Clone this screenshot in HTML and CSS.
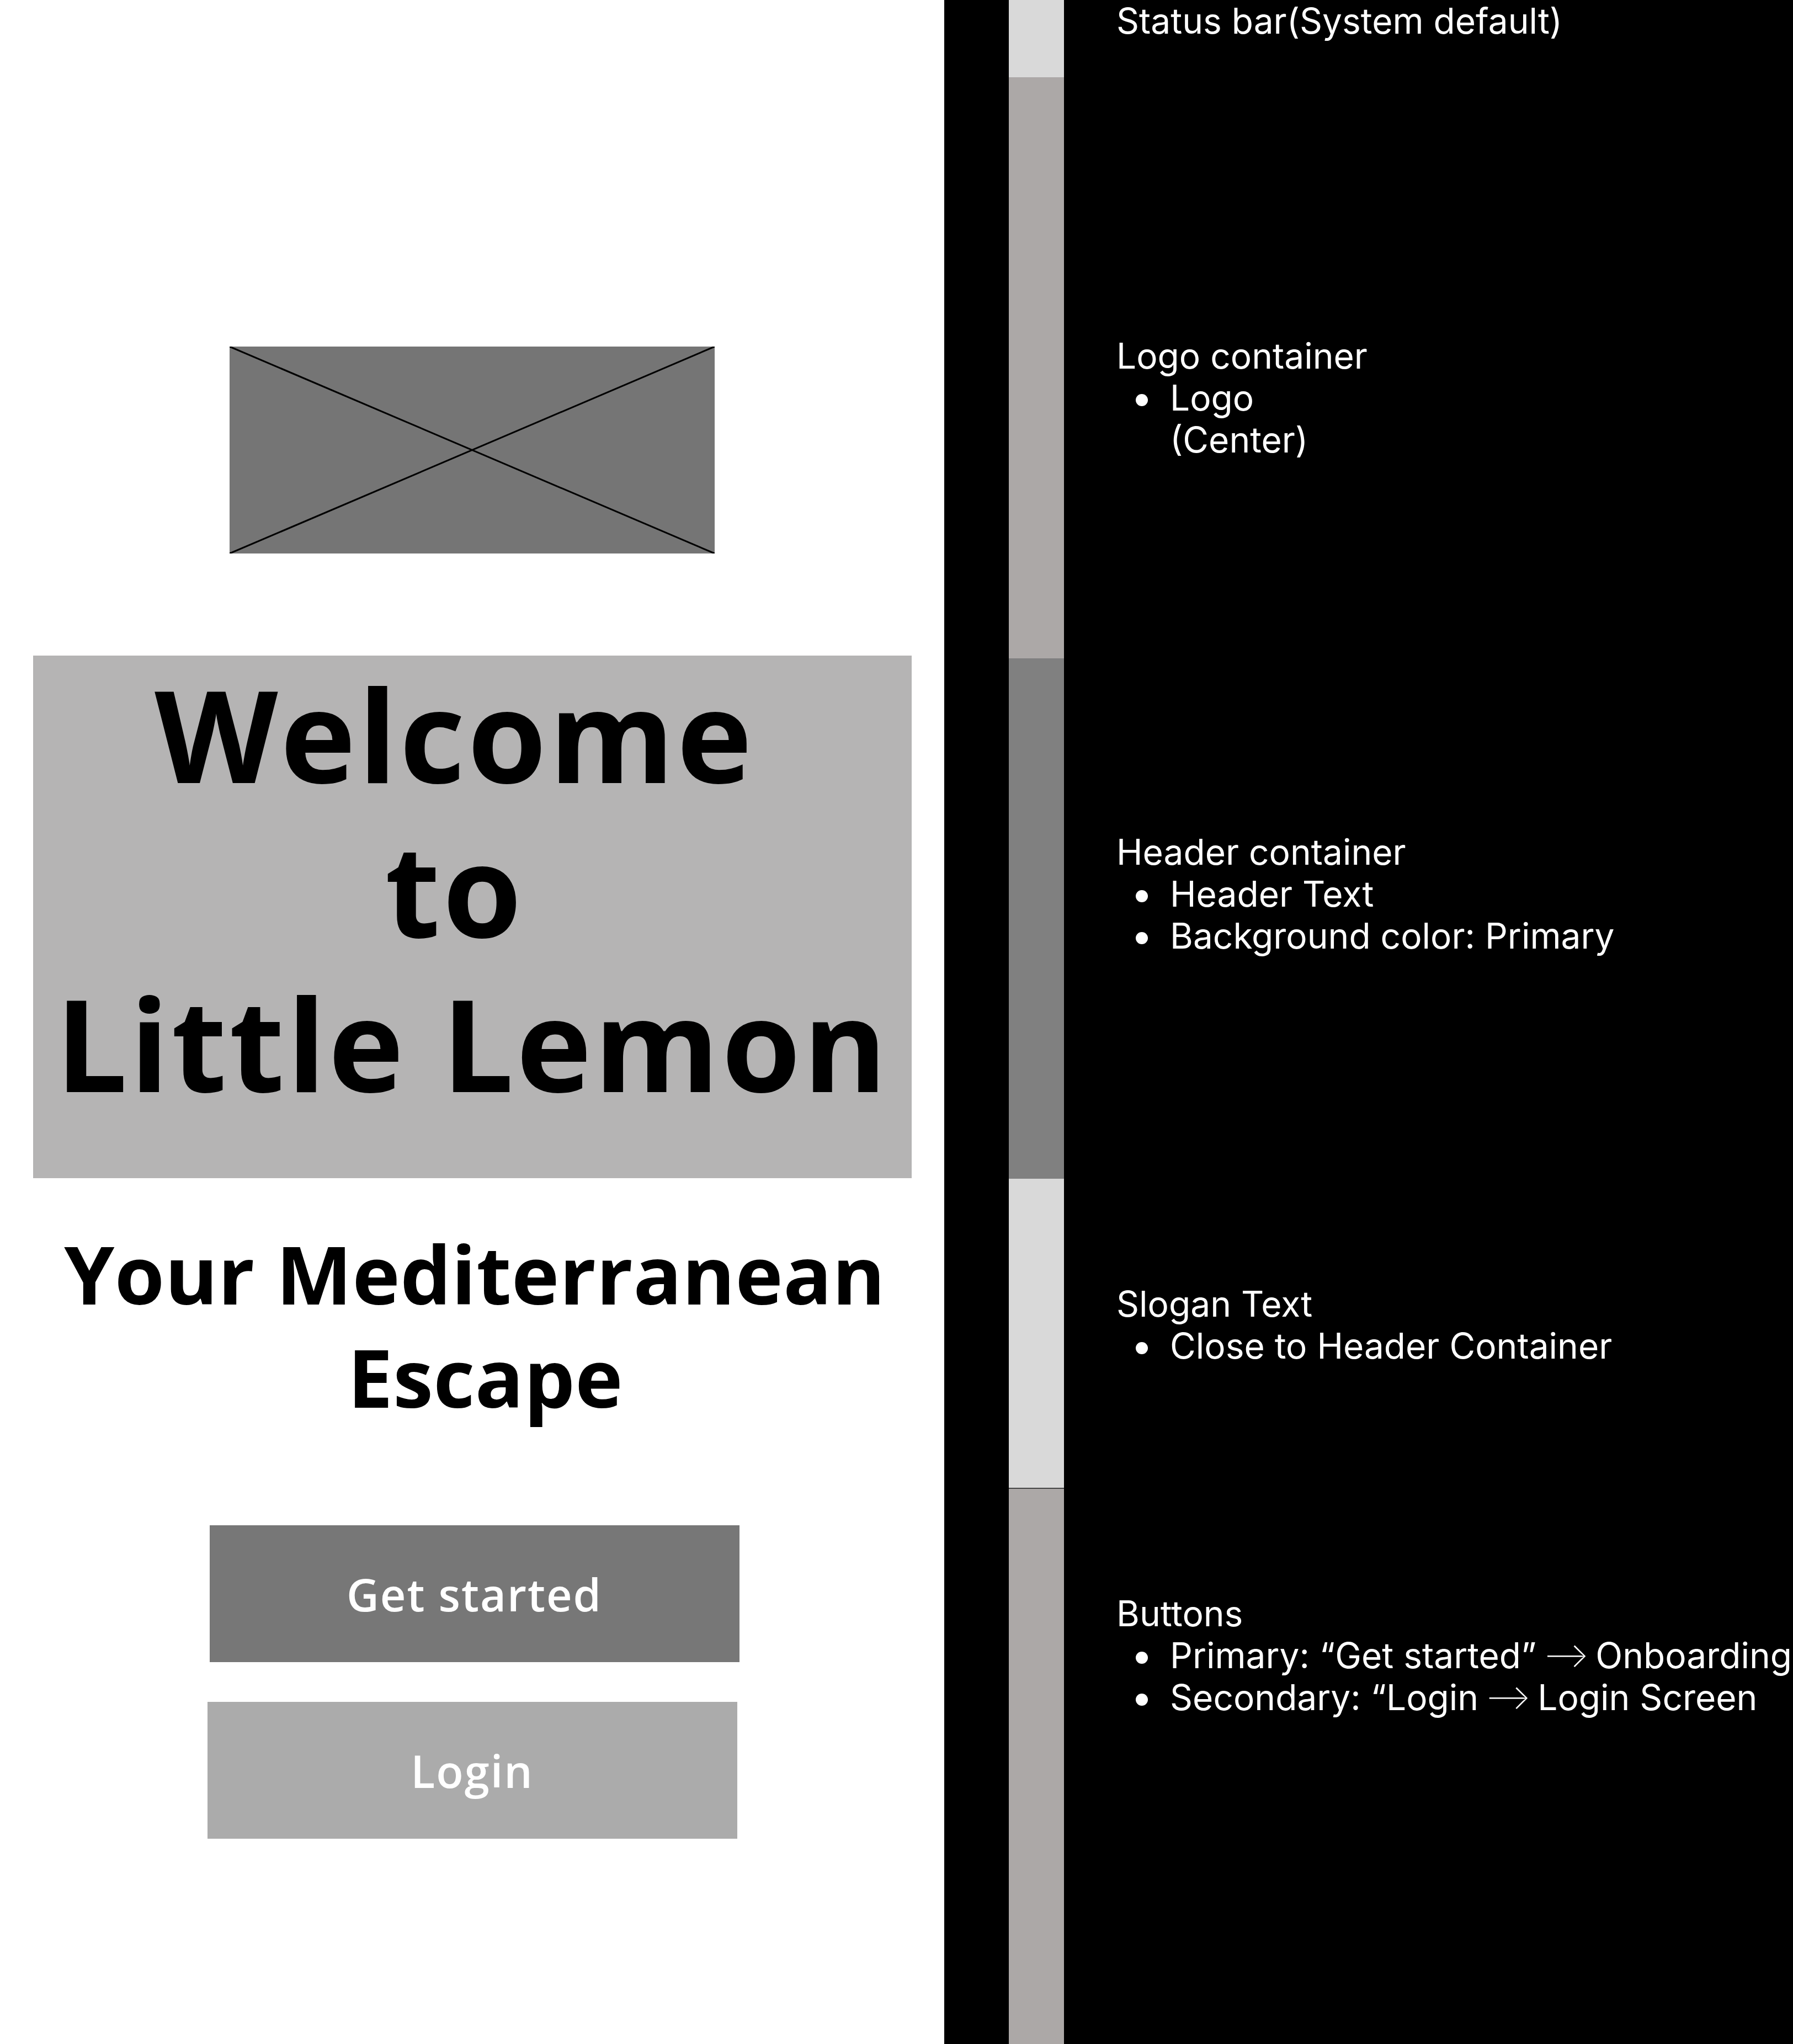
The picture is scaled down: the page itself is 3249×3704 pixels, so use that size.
FILE: index.html
```html
<!DOCTYPE html>
<html lang="en">
<head>
<meta charset="utf-8">
<title>Little Lemon – Welcome screen wireframe</title>
<link rel="stylesheet" href="styles.css">
</head>
<body>
<div class="board">
  <main class="screen">
    <div class="logo">
      <svg class="logo-svg" viewBox="0 0 879 375" preserveAspectRatio="none">
        <rect x="0" y="0" width="879" height="375" fill="#757575"/>
        <line x1="0" y1="0" x2="879" y2="375" stroke="#000" stroke-width="3"/>
        <line x1="879" y1="0" x2="0" y2="375" stroke="#000" stroke-width="3"/>
      </svg>
    </div>
    <header class="hero">
      <h1 class="hero-title"><span class="line">Welcome </span><span class="line">to </span><span class="line">Little Lemon</span></h1>
    </header>
    <p class="slogan"><span class="line">Your Mediterranean </span><span class="line">Escape</span></p>
    <div class="actions">
      <button class="btn btn-primary">Get started</button>
      <button class="btn btn-secondary">Login</button>
    </div>
  </main>
  <aside class="notes">
    <section class="note note-status">
      <div class="band band-light"></div>
      <div class="note-body">
        <p class="note-title">Status bar(System default)</p>
      </div>
    </section>
    <section class="note note-logo">
      <div class="band band-warm"></div>
      <div class="note-body">
        <p class="note-title">Logo container</p>
        <ul class="note-list">
          <li>Logo<br>(Center)</li>
        </ul>
      </div>
    </section>
    <section class="note note-header">
      <div class="band band-mid"></div>
      <div class="note-body">
        <p class="note-title">Header container</p>
        <ul class="note-list">
          <li>Header Text</li>
          <li>Background color: Primary</li>
        </ul>
      </div>
    </section>
    <section class="note note-slogan">
      <div class="band band-light"></div>
      <div class="note-body">
        <p class="note-title">Slogan Text</p>
        <ul class="note-list">
          <li>Close to Header Container</li>
        </ul>
      </div>
    </section>
    <section class="note note-buttons">
      <div class="band band-warm band-edge"></div>
      <div class="note-body">
        <p class="note-title">Buttons</p>
        <ul class="note-list">
          <li>Primary: “Get started” <span class="arrow">⟶</span> Onboarding</li>
          <li>Secondary: “Login <span class="arrow">⟶</span> Login Screen</li>
        </ul>
      </div>
    </section>
  </aside>
</div>
</body>
</html>
```

FILE: styles.css
```css
html, body {
  margin: 0;
  padding: 0;
  background: #000;
}

.board {
  width: 3249px;
  height: 3704px;
  display: flex;
  overflow: hidden;
}

/* ---------- left: phone screen ---------- */
.screen {
  width: 1711px;
  flex: none;
  background: #ffffff;
  display: flex;
  flex-direction: column;
  align-items: center;
  font-family: "Open Sans", "Liberation Sans", sans-serif;
  color: #000;
}

.logo {
  margin-top: 628px;
  width: 879px;
  height: 375px;
}

.logo-svg {
  display: block;
  width: 100%;
  height: 100%;
}

.hero {
  margin-top: 185px;
  width: 1592px;
  height: 947px;
  box-sizing: border-box;
  margin-left: 1px;
  background: #b5b4b4;
  padding-top: 2px;
}

.hero-title {
  margin: 0;
  font-size: 231px;
  font-weight: 700;
  line-height: 280px;
  letter-spacing: 4.5px;
  text-align: center;
}

.line {
  display: block;
  white-space: pre;
}

.slogan {
  margin: 79px 0 0 48px;
  font-size: 146px;
  font-weight: 700;
  line-height: 187px;
  letter-spacing: 0.5px;
  text-align: center;
  width: 1592px;
}

.actions {
  margin-top: 176px;
  display: flex;
  flex-direction: column;
  align-items: center;
  gap: 72px;
}

.btn {
  width: 960px;
  height: 248px;
  border: 0;
  padding: 0;
  color: #ffffff;
  font-family: "Open Sans", "Liberation Sans", sans-serif;
  font-size: 81px;
  font-weight: 600;
  letter-spacing: 2px;
  cursor: pointer;
}

.btn-primary {
  background: #777777;
  margin-left: 8px;
}

.btn-secondary {
  background: #ababab;
}

/* ---------- right: annotations ---------- */
.notes {
  flex: 1;
  background: #000;
  padding-left: 117px;
  display: flex;
  flex-direction: column;
  font-family: "Inter", "Liberation Sans", sans-serif;
  color: #ffffff;
  font-size: 64px;
  line-height: 76px;
  min-width: 0;
}

.note {
  display: flex;
  gap: 95px;
  flex: none;
}

.note-status { height: 140px; }
.note-logo { height: 1053px; }
.note-header { height: 943px; }
.note-slogan { height: 560px; }
.note-buttons { height: 1008px; }

.band {
  width: 100px;
  flex: none;
}

.band-light { background: #d9d9d9; }
.band-warm { background: #aca8a7; }
.band-mid { background: #808080; }
.band-edge { border-top: 2px solid #444; box-sizing: border-box; }

.note-body {
  white-space: nowrap;
}

.note-title {
  margin: 0;
}

.note-status .note-body { padding-top: 0; }
.note-logo .note-body { padding-top: 467px; }
.note-header .note-body { padding-top: 313px; }
.note-slogan .note-body { padding-top: 189px; }
.note-buttons .note-body { padding-top: 190px; }

.note-list {
  list-style: none;
  margin: 0;
  padding: 0 0 0 35px;
}

.note-list li {
  display: flex;
  align-items: flex-start;
}

.note-list li::before {
  content: "";
  flex: none;
  width: 22px;
  height: 22px;
  margin-top: 31px;
  margin-right: 40px;
  border-radius: 50%;
  background: #ffffff;
}

.arrow {
  display: inline-block;
  font-family: "DejaVu Sans", "Inter", sans-serif;
  font-weight: 200;
  font-size: 62px;
  line-height: 76px;
  margin: 0 12px;
  vertical-align: top;
}
```
